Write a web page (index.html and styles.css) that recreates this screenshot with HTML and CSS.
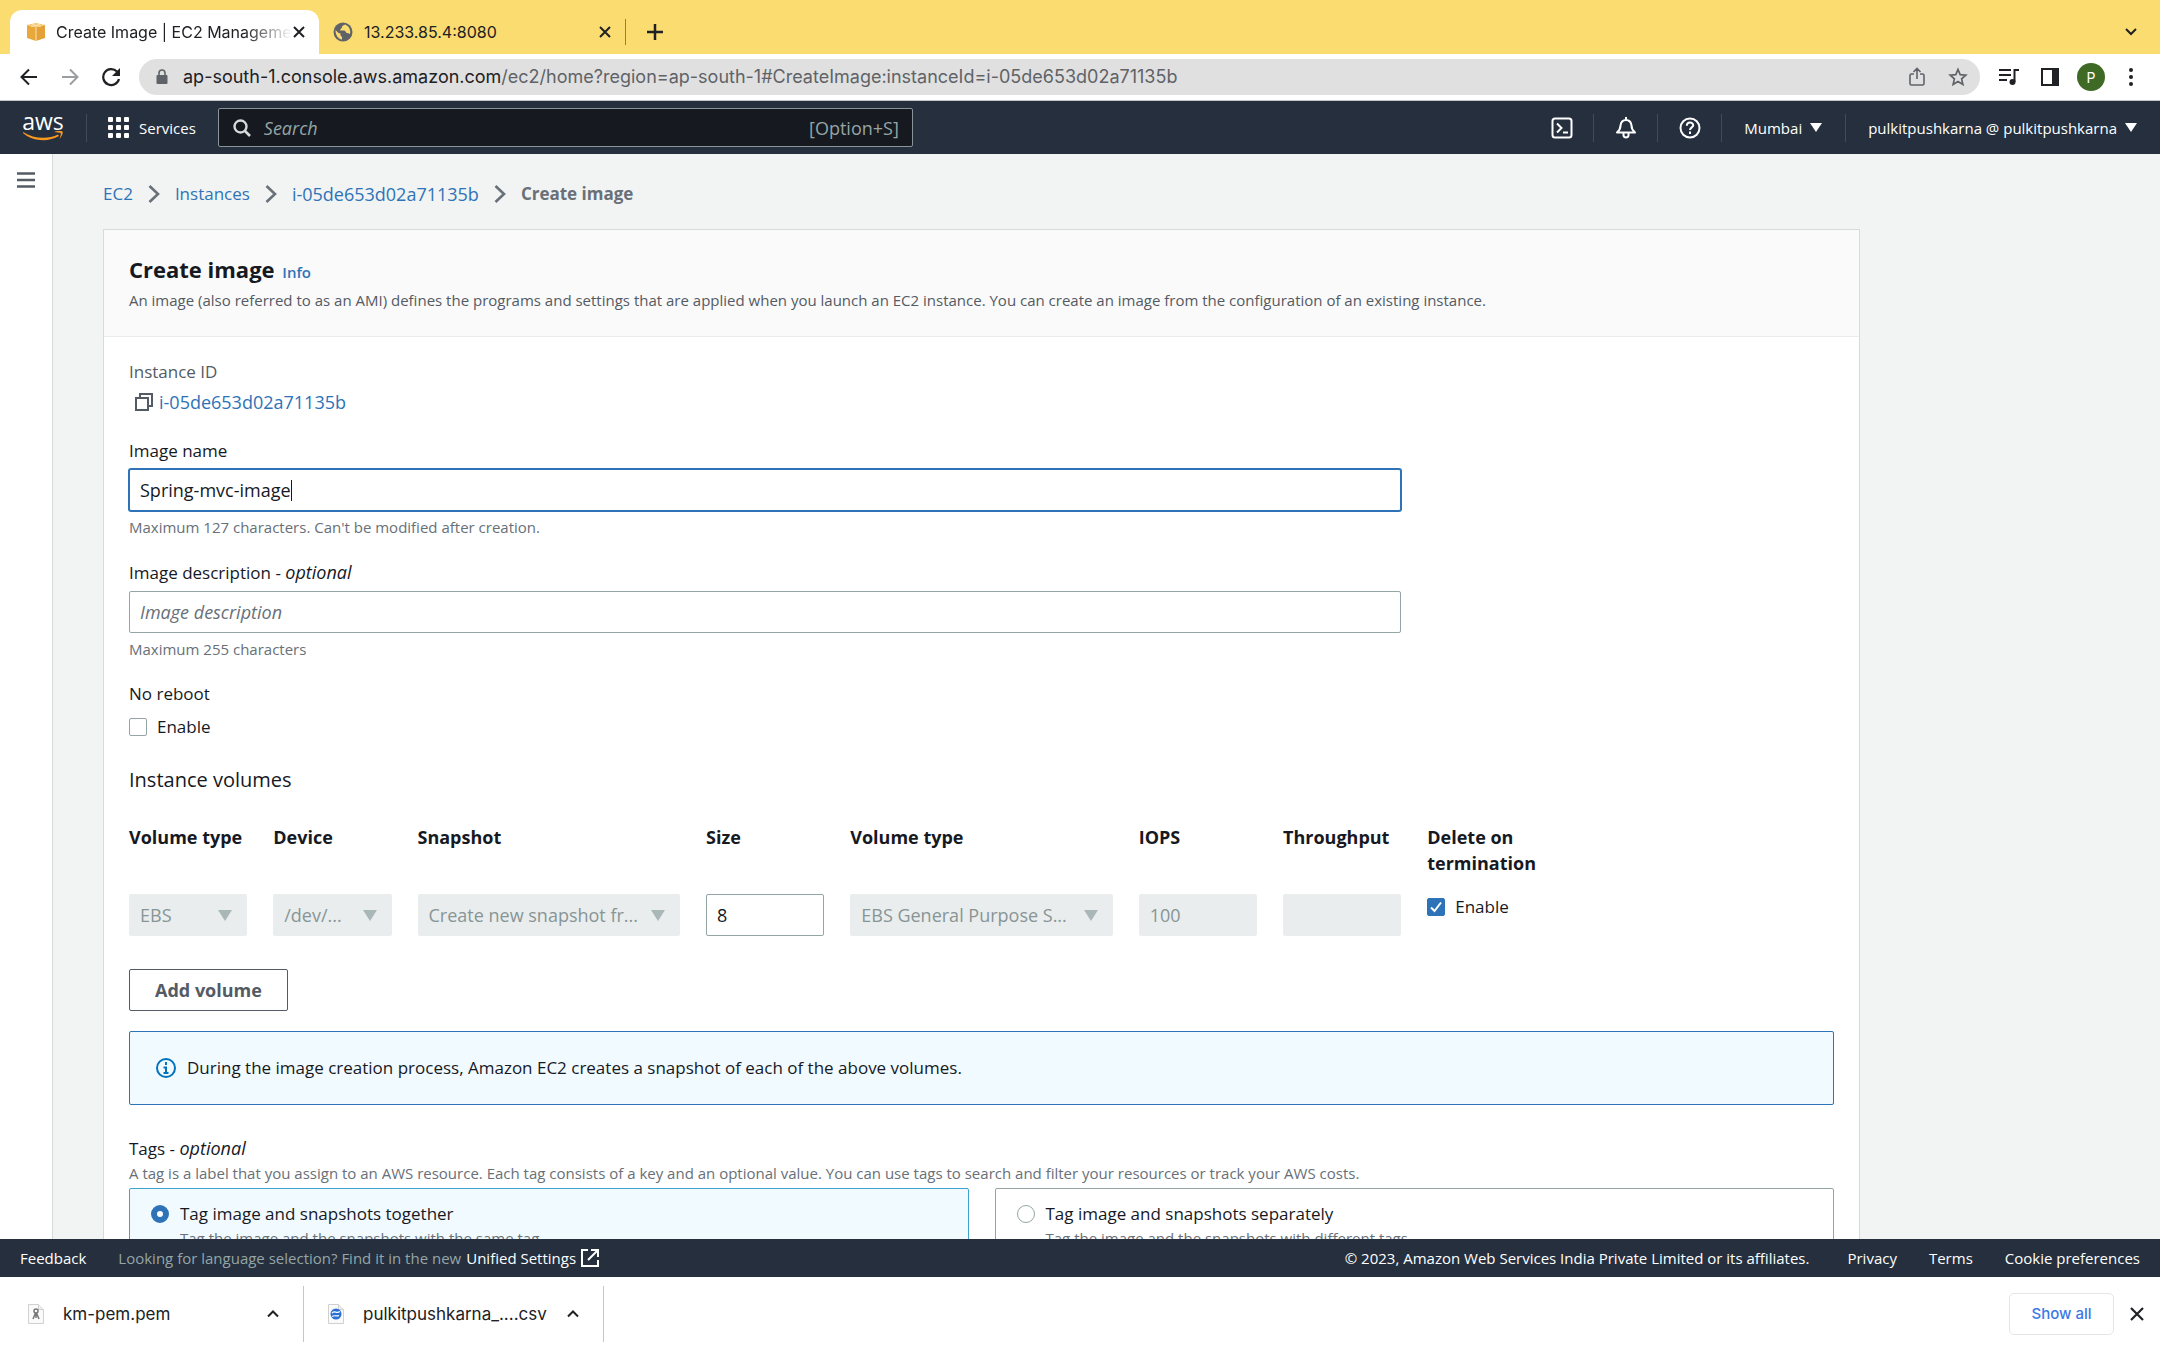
FILE: index.html
```html
<!DOCTYPE html>
<html lang="en">
<head>
    <meta charset="UTF-8">
    <title>Create Image | EC2 Management Console</title>
    <link rel="stylesheet" href="styles.css">
</head>
<body>
    <!-- browser tabs -->
    <div class="tab-strip">
        <div class="tab tab-active">
            <svg class="tab-icon" width="20" height="20" viewBox="0 0 20 20">
                <path d="M1 3l9 2v14l-9-3z" fill="#e9a83a"/>
                <path d="M19 3l-9 2v14l9-3z" fill="#e3a137"/>
                <path d="M1 3l9-2 9 2-9 2z" fill="#f6c565"/>
                <path d="M10 5v14M5 4.500l9-2M15 4.500l-9-2" stroke="#fbe3b4" stroke-width="1" fill="none"/>
            </svg>
            <span class="tab-title">Create Image | EC2 Manageme</span>
            <button class="tab-close" aria-label="Close tab"><svg width="14" height="14" viewBox="0 0 14 14"><path d="M2 2l10 10M12 2L2 12" stroke="#202124" stroke-width="2"/></svg></button>
        </div>
        <div class="tab">
            <svg class="tab-icon" width="20" height="20" viewBox="0 0 20 20">
                <circle cx="10" cy="10" r="9.500" fill="#5f6368"/>
                <path d="M2.500 8l3 3 2 .5v2l1.500 1.500v2.500C5 17 2.500 13 2.500 8zM12 2.500c-1 1-3 1-3 2.500S7 7 7 8.500h4c1.500 0 1.500 2 3 2.500 2 0 2 1 3 1 1-4-1-8-5-9.500z" fill="#fadc70"/>
            </svg>
            <span class="tab-title">13.233.85.4:8080</span>
            <button class="tab-close" aria-label="Close tab"><svg width="14" height="14" viewBox="0 0 14 14"><path d="M2 2l10 10M12 2L2 12" stroke="#202124" stroke-width="2"/></svg></button>
        </div>
        <button class="new-tab" aria-label="New tab"><svg width="16" height="16" viewBox="0 0 16 16"><path d="M8 0v16M0 8h16" stroke="#202124" stroke-width="2.500"/></svg></button>
        <button class="tab-search" aria-label="Search tabs"><svg width="14" height="10" viewBox="0 0 14 10"><path d="M2 2l5 5 5-5" stroke="#202124" stroke-width="2" fill="none"/></svg></button>
    </div>

    <!-- address bar -->
    <div class="toolbar">
        <button class="tool" aria-label="Back"><svg width="18" height="18" viewBox="0 0 18 18"><path d="M17 9H2M9 1.500L1.500 9 9 16.500" stroke="#202124" stroke-width="2" fill="none"/></svg></button>
        <button class="tool" aria-label="Forward"><svg width="18" height="18" viewBox="0 0 18 18"><path d="M1 9h15M9 1.500L16.500 9 9 16.500" stroke="#9b9da0" stroke-width="2" fill="none"/></svg></button>
        <button class="tool" aria-label="Reload"><svg width="20" height="20" viewBox="0 0 20 20"><path d="M16 4.500A8 8 0 1 0 18 12" stroke="#202124" stroke-width="2.200" fill="none"/><path d="M19 1v8h-8z" fill="#202124"/></svg></button>
        <div class="omnibox">
            <svg width="12" height="16" viewBox="0 0 12 16"><rect x="0.500" y="6" width="11" height="9" rx="1" fill="#5f6368"/><path d="M3 6V4a3 3 0 0 1 6 0v2" stroke="#5f6368" stroke-width="1.600" fill="none"/></svg>
            <span class="url"><b>ap-south-1.console.aws.amazon.com</b>/ec2/home?region=ap-south-1#CreateImage:instanceId=i-05de653d02a71135b</span>
            <button class="tool" aria-label="Share"><svg width="16" height="20" viewBox="0 0 16 20"><path d="M5 7H2.500q-1.500 0-1.500 1.500v8Q1 18 2.500 18h11q1.500 0 1.500-1.500v-8Q15 7 13.500 7H11M8 12V2M4.500 5L8 1.500 11.500 5" stroke="#5f6368" stroke-width="1.600" fill="none"/></svg></button>
            <button class="tool" aria-label="Bookmark"><svg width="20" height="20" viewBox="0 0 20 20"><path d="M10 2.500l2.200 5.200 5.600.5-4.200 3.700 1.300 5.500L10 14.500l-4.900 2.900 1.300-5.500-4.200-3.700 5.600-.5z" stroke="#5f6368" stroke-width="1.700" fill="none"/></svg></button>
        </div>
        <button class="tool" aria-label="Media"><svg width="22" height="18" viewBox="0 0 22 18"><path d="M1 2h12M1 7h12M1 12h8" stroke="#202124" stroke-width="2"/><path d="M16.500 14V2H21" stroke="#202124" stroke-width="2" fill="none"/><circle cx="14.500" cy="14" r="3" fill="#202124"/></svg></button>
        <button class="tool" aria-label="Side panel"><svg width="18" height="18" viewBox="0 0 18 18"><path d="M0 0h18v18H0zM2 2v14h9V2z" fill="#202124" fill-rule="evenodd"/></svg></button>
        <button class="tool avatar" aria-label="Profile">P</button>
        <button class="tool" aria-label="Menu"><svg width="4" height="18" viewBox="0 0 4 18"><circle cx="2" cy="2" r="2" fill="#202124"/><circle cx="2" cy="9" r="2" fill="#202124"/><circle cx="2" cy="16" r="2" fill="#202124"/></svg></button>
    </div>

    <!-- aws header -->
    <nav class="aws-nav">
        <a class="logo" href="#" aria-label="AWS home">
            <span>aws</span>
            <svg width="40" height="10" viewBox="0 0 40 10"><path d="M0 1c11 7 25 7.500 35 2.500l1 1.500C26 11 10 11 0 2z" fill="#f7981f"/><path d="M31 1c3-1.500 7-1.500 8.500-.5.800 1.500-.5 5-3 7.500 1-3 1.800-5 1-6-1-.6-3.500-.6-6.500-1z" fill="#f7981f"/></svg>
        </a>
        <a class="services" href="#">
            <svg width="21" height="21" viewBox="0 0 21 21" fill="#fff"><rect width="5" height="5" rx="1"/><rect x="8" width="5" height="5" rx="1"/><rect x="16" width="5" height="5" rx="1"/><rect y="8" width="5" height="5" rx="1"/><rect x="8" y="8" width="5" height="5" rx="1"/><rect x="16" y="8" width="5" height="5" rx="1"/><rect y="16" width="5" height="5" rx="1"/><rect x="8" y="16" width="5" height="5" rx="1"/><rect x="16" y="16" width="5" height="5" rx="1"/></svg>
            Services
        </a>
        <label class="search">
            <svg width="18" height="18" viewBox="0 0 18 18"><circle cx="7.500" cy="7.500" r="6" stroke="#d5dbdb" stroke-width="2.400" fill="none"/><path d="M12 12l5 5" stroke="#d5dbdb" stroke-width="2.600"/></svg>
            <input type="search" placeholder="Search">
            <span>[Option+S]</span>
        </label>
        <div class="nav-right">
            <button class="nav-icon" aria-label="CloudShell"><svg width="22" height="22" viewBox="0 0 22 22" fill="none" stroke="#fff" stroke-width="2"><rect x="1.500" y="1.500" width="19" height="19" rx="2.500"/><path d="M6 6.500l4.500 4.500L6 15.500M12 15.500h5"/></svg></button>
            <button class="nav-icon" aria-label="Notifications"><svg width="22" height="22" viewBox="0 0 22 22" fill="none" stroke="#fff" stroke-width="2" stroke-linejoin="round"><path d="M2 15.500C5 13 5.500 11 5.500 8.500 6 5 8.500 3 11 3s5 2 5.500 5.500c0 2.500.5 4.500 3.500 7zM8.500 16v2.500c.5 2.500 4.500 2.500 5 0V16M11 0v3"/></svg></button>
            <button class="nav-icon" aria-label="Help"><svg width="22" height="22" viewBox="0 0 22 22" fill="none" stroke="#fff" stroke-width="2"><circle cx="11" cy="11" r="9.500"/><path d="M7.800 8.800c0-4.300 6.400-4.300 6.400-.5 0 2-3.200 2.200-3.200 4.700M11 14.500V17"/></svg></button>
            <button class="nav-menu">Mumbai <i class="caret"></i></button>
            <button class="nav-menu">pulkitpushkarna @ pulkitpushkarna <i class="caret"></i></button>
        </div>
    </nav>

    <div class="page">
        <aside class="side">
            <button aria-label="Open navigation"><svg width="18" height="16" viewBox="0 0 18 16"><path d="M0 1.500h18M0 8h18M0 14.500h18" stroke="#545b64" stroke-width="2.400"/></svg></button>
        </aside>
        <main>
            <div class="breadcrumb">
                <a href="#">EC2</a>
                <svg width="12" height="20" viewBox="0 0 12 20"><path d="M1.500 2l8.500 8-8.500 8" stroke="#687078" stroke-width="2.600" fill="none"/></svg>
                <a href="#">Instances</a>
                <svg width="12" height="20" viewBox="0 0 12 20"><path d="M1.500 2l8.500 8-8.500 8" stroke="#687078" stroke-width="2.600" fill="none"/></svg>
                <a href="#" class="id">i-05de653d02a71135b</a>
                <svg width="12" height="20" viewBox="0 0 12 20"><path d="M1.500 2l8.500 8-8.500 8" stroke="#687078" stroke-width="2.600" fill="none"/></svg>
                <b>Create image</b>
            </div>

            <form class="card">
                <header class="card-head">
                    <h1>Create image <a href="#">Info</a></h1>
                    <p>An image (also referred to as an AMI) defines the programs and settings that are applied when you launch an EC2 instance. You can create an image from the configuration of an existing instance.</p>
                </header>
                <div class="card-body">
                    <div class="field instance">
                        <span class="muted">Instance ID</span>
                        <div class="copy">
                            <svg width="18" height="18" viewBox="0 0 18 18" fill="none" stroke="#545b64" stroke-width="2"><rect x="1" y="5" width="12" height="12"/><path d="M5 5V1h12v12h-4"/></svg>
                            <a href="#" class="id">i-05de653d02a71135b</a>
                        </div>
                    </div>

                    <div class="field">
                        <label for="name">Image name</label>
                        <div class="grid">
                            <div class="span9 focus-wrap">
                                <input class="box focused" type="text" id="name" value="Spring-mvc-image">
                                <i class="text-cursor"></i>
                            </div>
                        </div>
                        <small>Maximum 127 characters. Can't be modified after creation.</small>
                    </div>

                    <div class="field">
                        <label for="desc">Image description - <em>optional</em></label>
                        <div class="grid">
                            <input class="box span9" type="text" id="desc" placeholder="Image description">
                        </div>
                        <small>Maximum 255 characters</small>
                    </div>

                    <div class="field reboot">
                        <span>No reboot</span>
                        <label class="check"><input type="checkbox"> Enable</label>
                    </div>

                    <h2>Instance volumes</h2>
                    <div class="grid vol-head">
                        <b>Volume type</b>
                        <b>Device</b>
                        <b class="span2">Snapshot</b>
                        <b>Size</b>
                        <b class="span2">Volume type</b>
                        <b>IOPS</b>
                        <b>Throughput</b>
                        <b>Delete on termination</b>
                    </div>
                    <div class="grid vol-row">
                        <div class="select"><select class="box" aria-label="Volume type" disabled><option>EBS</option></select></div>
                        <div class="select"><select class="box" aria-label="Device" disabled><option>/dev/...</option></select></div>
                        <div class="select span2"><select class="box" aria-label="Snapshot" disabled><option>Create new snapshot fr...</option></select></div>
                        <input class="box" type="text" aria-label="Size" value="8">
                        <div class="select span2"><select class="box" aria-label="EBS volume type" disabled><option>EBS General Purpose S...</option></select></div>
                        <input class="box" type="text" aria-label="IOPS" value="100" disabled>
                        <input class="box" type="text" aria-label="Throughput" disabled>
                        <label class="check"><input type="checkbox" checked> Enable</label>
                    </div>
                    <button class="add" type="button">Add volume</button>

                    <div class="alert">
                        <svg width="20" height="20" viewBox="0 0 20 20" fill="none" stroke="#0073bb" stroke-width="2"><circle cx="10" cy="10" r="9"/><path d="M10 4v3M7.500 9.500H10V15M7.500 15h5"/></svg>
                        During the image creation process, Amazon EC2 creates a snapshot of each of the above volumes.
                    </div>

                    <div class="tags-title">Tags - <em>optional</em></div>
                    <small class="tags-info">A tag is a label that you assign to an AWS resource. Each tag consists of a key and an optional value. You can use tags to search and filter your resources or track your AWS costs.</small>
                    <div class="tiles">
                        <label class="tile tile-on">
                            <input type="radio" name="tags" checked>
                            <span>Tag image and snapshots together<small>Tag the image and the snapshots with the same tag.</small></span>
                        </label>
                        <label class="tile">
                            <input type="radio" name="tags">
                            <span>Tag image and snapshots separately<small>Tag the image and the snapshots with different tags.</small></span>
                        </label>
                    </div>
                </div>
            </form>
        </main>
    </div>

    <footer class="aws-footer">
        <a href="#">Feedback</a>
        <p>Looking for language selection? Find it in the new <a href="#">Unified Settings</a>
            <svg width="18" height="18" viewBox="0 0 18 18" fill="none" stroke="#fff" stroke-width="2"><path d="M7 1H1v16h16v-6M10 1h7v7M17 1L7 11"/></svg></p>
        <span class="copyright">© 2023, Amazon Web Services India Private Limited or its affiliates.</span>
        <a href="#">Privacy</a>
        <a href="#">Terms</a>
        <a href="#">Cookie preferences</a>
    </footer>

    <!-- downloads -->
    <div class="downloads">
        <div class="file">
            <svg width="16" height="20" viewBox="0 0 16 20"><path d="M.5.5h10l5 5v14H.5z" fill="#fafafa" stroke="#d0d0d0"/><path d="M10.500.5v5h5" fill="#eee" stroke="#d0d0d0"/><circle cx="8" cy="7" r="2" fill="none" stroke="#777" stroke-width="1.500"/><path d="M7.500 9L5 15M8 9v5M8.500 9l2.500 6" stroke="#777" stroke-width="1.500"/></svg>
            <span>km-pem.pem</span>
            <button aria-label="Options"><svg width="12" height="9" viewBox="0 0 12 9"><path d="M1 7.500l5-5 5 5" stroke="#202124" stroke-width="2" fill="none"/></svg></button>
        </div>
        <div class="file">
            <svg width="16" height="20" viewBox="0 0 16 20"><path d="M.5.5h10l5 5v14H.5z" fill="#fafafa" stroke="#d0d0d0"/><path d="M10.500.5v5h5" fill="#eee" stroke="#d0d0d0"/><circle cx="8" cy="10" r="5.500" fill="#2a6fd6"/><path d="M4 9c3-3 4 1 8-1.500M4 12.500c3-2 4 .5 7-1" stroke="#fff" stroke-width="1.200" fill="none"/></svg>
            <span>pulkitpushkarna_....csv</span>
            <button aria-label="Options"><svg width="12" height="9" viewBox="0 0 12 9"><path d="M1 7.500l5-5 5 5" stroke="#202124" stroke-width="2" fill="none"/></svg></button>
        </div>
        <button class="show-all">Show all</button>
        <button class="bar-close" aria-label="Close"><svg width="14" height="14" viewBox="0 0 14 14"><path d="M1 1l12 12M13 1L1 13" stroke="#202124" stroke-width="2.200"/></svg></button>
    </div>
</body>
</html>
```
FILE: styles.css
```css
:root{
    --navy: #252f3e;
    --link: #2e73b8;
    --text: #16191f;
    --muted: #545b64;
    --hint: #687078;
    --line: #aab7b8;
    --yellow: #fadc70;
    --ui: "Open Sans", "Noto Sans", sans-serif;
    --chrome: Inter, Roboto, sans-serif;
}

*{box-sizing: border-box;}
body{
    display: flex;
    flex-direction: column;
    height: 100vh;
    margin: 0;
    overflow: hidden;
    font-family: var(--ui);
    font-size: 17px;
    line-height: 26px;
    color: var(--text);
    background-color: white;
}
a{color: var(--link); text-decoration: none;}
em{font-size: 18px;}
button{
    cursor: pointer;
    padding: 0;
    border: none;
    background: none;
    font-family: inherit;
    color: inherit;
}
svg{display: block; flex: none;}
h1, h2, p{margin: 0;}

/*---------- tabs ----------*/
.tab-strip{
    display: flex;
    align-items: flex-end;
    height: 54px;
    flex: none;
    padding-left: 10px;
    padding-right: 22px;
    font-family: var(--chrome);
    font-size: 16px;
    color: #202124;
    background-color: var(--yellow);
}
.tab{
    display: flex;
    align-items: center;
    width: 306px;
    height: 44px;
    padding: 0 13px 0 14px;
}
.tab-active{
    width: 309px;
    padding: 0 14px 0 16px;
    border-radius: 12px 12px 0 0;
    background-color: white;
}
.tab-title{
    flex: 1;
    margin-left: 11px;
    white-space: nowrap;
}
.tab-active .tab-title{
    margin-left: 10px;
    -webkit-mask-image: linear-gradient(to right, black 80%, transparent);
    mask-image: linear-gradient(to right, black 80%, transparent);
}
.new-tab{
    display: flex;
    align-items: center;
    height: 26px;
    margin-bottom: 9px;
    padding-left: 21px;
    border-left: 1px solid #8f8148;
}
.tab-search{margin-left: auto; margin-bottom: 17px;}

/*---------- toolbar ----------*/
.toolbar{
    display: flex;
    align-items: center;
    height: 47px;
    flex: none;
    padding: 0 15px 0 8px;
    border-bottom: 1px solid #c4c6c8;
    font-family: var(--chrome);
    background-color: white;
}
.tool{
    display: flex;
    align-items: center;
    justify-content: center;
    width: 41px;
    height: 28px;
}
.toolbar > .tool:last-child{width: 28px; margin-left: 12px;}
.omnibox{
    display: flex;
    align-items: center;
    flex: 1;
    height: 36px;
    margin: 0 8px;
    padding: 0 2px 0 17px;
    border-radius: 18px;
    background-color: #e0e0e0;
}
.url{
    flex: 1;
    margin-left: 15px;
    font-size: 18px;
    color: #5f6368;
}
.url b{font-weight: normal; color: #202124;}
.avatar{
    width: 28px;
    margin-left: 7px;
    border-radius: 50%;
    font-size: 14px;
    color: white;
    background-color: #3f6a25;
}

/*---------- aws header ----------*/
.aws-nav{
    display: flex;
    align-items: center;
    height: 53px;
    flex: none;
    padding-left: 23px;
    font-size: 15px;
    color: white;
    background-color: var(--navy);
}
.aws-nav a{color: white;}
.logo{
    display: flex;
    flex-direction: column;
    align-items: center;
    width: 40px;
    padding-bottom: 4px;
    font-size: 23px;
    font-weight: 500;
    line-height: 20px;
}
.services{
    display: flex;
    align-items: center;
    gap: 10px;
    height: 28px;
    margin-left: 23px;
    padding: 0 22px 0 21px;
    border-left: 1px solid #414a57;
    font-size: 15px;
    font-weight: 500;
}
.search{
    display: flex;
    align-items: center;
    width: 695px;
    height: 39px;
    padding: 0 13px 0 14px;
    border: 1px solid #879596;
    border-radius: 2px;
    font-size: 18px;
    color: #95a5a6;
    background-color: #16191f;
}
.search input{
    flex: 1;
    margin-left: 13px;
    padding: 0;
    border: none;
    outline: none;
    font: inherit;
    color: white;
    background: none;
}
.search input::placeholder{font-style: italic; color: #95a5a6;}
.nav-right{display: flex; margin-left: auto;}
.nav-icon{
    display: flex;
    align-items: center;
    justify-content: center;
    width: 64px;
    height: 28px;
    border-right: 1px solid #414a57;
}
.nav-menu{
    display: flex;
    align-items: center;
    gap: 8px;
    height: 28px;
    padding: 0 23px 0 22px;
    border-right: 1px solid #414a57;
    font-size: 15px;
    font-weight: 500;
}
.nav-menu:last-child{border: none;}
.caret{
    border: 6px solid transparent;
    border-top: 9px solid white;
    border-bottom: none;
}

/*---------- page ----------*/
.page{
    display: flex;
    flex: 1;
    min-height: 0;
    overflow: hidden;
    background-color: #f2f3f3;
}
.side{
    width: 53px;
    flex: none;
    padding: 15px 17px;
    border-right: 1px solid #d5dbdb;
    background-color: white;
}
main{
    flex: 1;
    padding: 27px 300px 0 50px;
}
.breadcrumb{
    display: flex;
    align-items: center;
    gap: 15px;
    margin-bottom: 22px;
}
.breadcrumb b{color: var(--hint);}
.id{font-size: 18px;}

.card{
    border: 1px solid #d5dbdb;
    background-color: white;
}
.card-head{
    padding: 23px 25px 24px;
    border-bottom: 1px solid #eaeded;
    background-color: #fafafa;
}
.card-head h1{
    font-size: 22px;
    line-height: 32px;
}
.card-head h1 a{
    margin-left: 2px;
    font-size: 15px;
    font-weight: 600;
}
.card-head p{
    font-size: 15px;
    line-height: 24px;
    color: var(--muted);
}
.card-body{padding: 22px 25px;}

/*---------- form ----------*/
.field{
    display: flex;
    flex-direction: column;
    gap: 5px;
    margin-bottom: 21px;
}
.instance{gap: 4px; margin-bottom: 23px;}
.reboot{gap: 7px; margin-bottom: 25px;}
.muted{color: var(--muted);}
small{
    display: block;
    font-size: 15px;
    line-height: 22px;
    color: var(--hint);
}
.copy{
    display: flex;
    align-items: center;
    gap: 6px;
    padding-left: 6px;
}
.grid{
    display: grid;
    grid-template-columns: repeat(12, minmax(0, 1fr));
    column-gap: 26px;
}
.span2{grid-column: span 2;}
.span9{grid-column: span 9;}
.box{
    width: 100%;
    height: 42px;
    padding: 0 10px;
    border: 1px solid var(--line);
    border-radius: 2px;
    outline: none;
    font: inherit;
    font-size: 18px;
    color: var(--text);
    background-color: white;
}
input.box{border-color: #95a5a6;}
.box::placeholder{font-style: italic; color: var(--hint);}
input.focused{
    border-color: var(--link);
    box-shadow: 0 0 0 1px var(--link);
}
.focus-wrap{position: relative;}
.text-cursor{
    position: absolute;
    top: 11px;
    left: 162px;
    width: 1px;
    height: 21px;
    background-color: var(--text);
}
.box:disabled{
    opacity: 1;
    border-color: #eaeded;
    color: #879596;
    background-color: #eaeded;
}
.select{position: relative;}
.select select{
    display: block;
    appearance: none;
    -webkit-appearance: none;
}
.select::after{
    content: "";
    position: absolute;
    top: 16px;
    right: 15px;
    border: 7px solid transparent;
    border-top: 11px solid var(--line);
    border-bottom: none;
}
.check{
    display: flex;
    align-items: center;
    gap: 10px;
}
.check input, .tile input{
    appearance: none;
    -webkit-appearance: none;
    width: 18px;
    height: 18px;
    flex: none;
    margin: 0;
    border: 1px solid #95a5a6;
    border-radius: 2px;
    background-color: white;
}
.check input:checked{
    border-color: var(--link);
    background: var(--link) url("data:image/svg+xml,%3Csvg xmlns='http://www.w3.org/2000/svg' viewBox='0 0 16 16'%3E%3Cpath d='M3 8.500l3.500 3.500L13 3.500' fill='none' stroke='white' stroke-width='2'/%3E%3C/svg%3E") center no-repeat;
}
h2{
    margin-bottom: 29px;
    font-size: 20px;
    font-weight: normal;
    line-height: 30px;
}
.vol-head{margin-bottom: 18px; font-size: 18px;}
.vol-head b{white-space: nowrap;}
.vol-head b:last-child{white-space: normal;}
.vol-row .check{align-self: start;}
.add{
    height: 42px;
    margin-top: 33px;
    padding: 0 25px;
    border: 1px solid var(--muted);
    border-radius: 2px;
    font-size: 18px;
    font-weight: bold;
    color: var(--muted);
}
.alert{
    display: flex;
    align-items: center;
    gap: 11px;
    height: 74px;
    margin: 20px 0 30px;
    padding: 0 26px;
    border: 1px solid var(--link);
    border-radius: 2px;
    background-color: #f1faff;
}
.tags-info{margin-bottom: 4px;}

/*---------- radio tiles ----------*/
.tiles{
    display: grid;
    grid-template-columns: 1fr 1fr;
    gap: 26px;
}
.tile{
    display: flex;
    gap: 11px;
    padding: 12px 21px;
    border: 1px solid #95a5a6;
    border-radius: 2px;
}
.tile-on{border-color: #3fa3cf; background-color: #f1faff;}
.tile input{margin-top: 4px; border-radius: 50%;}
.tile input:checked{border: 6px solid var(--link);}

/*---------- footer ----------*/
.aws-footer{
    display: flex;
    align-items: center;
    gap: 32px;
    height: 38px;
    flex: none;
    padding: 0 20px;
    font-size: 15px;
    color: #95a5a6;
    background-color: var(--navy);
}
.aws-footer a, .aws-footer span{color: white; font-weight: 500;}
.aws-footer p{display: flex; align-items: center; gap: 5px;}
.copyright{
    margin-left: auto;
    margin-right: 6px;
}

/*---------- downloads ----------*/
.downloads{
    display: flex;
    align-items: center;
    height: 73px;
    flex: none;
    padding: 0 16px 0 4px;
    font-family: var(--chrome);
    font-size: 17px;
    color: #202124;
    background-color: white;
}
.file{
    display: flex;
    align-items: center;
    width: 300px;
    height: 56px;
    padding: 0 24px;
    border-right: 1px solid #c4c6c8;
}
.file span{flex: 1; margin-left: 19px;}
.show-all{
    width: 105px;
    height: 42px;
    margin-left: auto;
    margin-right: 16px;
    border: 1px solid #e4e5e7;
    border-radius: 5px;
    font-size: 15px;
    font-weight: 500;
    color: #3b78e7;
}
```
